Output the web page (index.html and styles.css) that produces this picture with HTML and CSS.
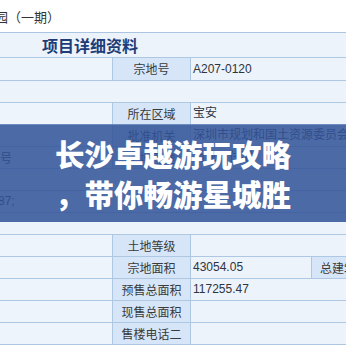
FILE: index.html
```html
<!DOCTYPE html>
<html lang="zh-CN">
<head>
<meta charset="utf-8">
<title>项目详细资料</title>
<link rel="stylesheet" href="styles.css">
</head>
<body>
<div class="top"><span class="crumb">园（一期）</span></div>
<div class="sheet">
  <div class="row head"><span class="head-title">项目详细资料</span></div>
  <div class="row first"><div class="c-left"></div><div class="c-label">宗地号</div><div class="c-val">A207-0120</div></div>
  <div class="row"></div>
  <div class="row"><div class="c-left"></div><div class="c-label">所在区域</div><div class="c-val">宝安</div></div>
  <div class="row"><div class="c-left"></div><div class="c-label">批准机关</div><div class="c-val">深圳市规划和国土资源委员会</div></div>
  <div class="row"><div class="c-left"><span class="spill">证号</span></div><div class="c-label">土地用途</div><div class="c-val">商业、住宅</div></div>
  <div class="row"></div>
  <div class="row"><div class="c-left"><span class="spill num">87;</span></div></div>
  <div class="row"></div>
  <div class="row"><div class="c-left"></div><div class="c-label">土地等级</div><div class="c-val"></div></div>
  <div class="row"><div class="c-left"></div><div class="c-label">宗地面积</div><div class="c-val narrow">43054.05</div><div class="c-label wide">总建筑面积</div></div>
  <div class="row"><div class="c-left"></div><div class="c-label">预售总面积</div><div class="c-val">117255.47</div></div>
  <div class="row"><div class="c-left"></div><div class="c-label">现售总面积</div><div class="c-val"></div></div>
  <div class="row"><div class="c-left"></div><div class="c-label">售楼电话二</div><div class="c-val"></div></div>

  <div class="banner">
    <div class="banner-line">长沙卓越游玩攻略</div>
    <div class="banner-line">，带你畅游星城胜</div>
  </div>
</div>
</body>
</html>
```

FILE: styles.css
```css
html, body {
  margin: 0;
  padding: 0;
  background: #ffffff;
  overflow: hidden;
}
body {
  width: 346px;
  height: 346px;
  font-family: "Liberation Sans", "Noto Sans CJK SC", sans-serif;
  font-size: 12px;
  color: #333333;
}
.top {
  height: 32px;
  line-height: 34px;
  font-size: 13px;
  font-family: "Noto Sans CJK SC", sans-serif;
  color: #333;
  white-space: nowrap;
  overflow: hidden;
}
.crumb {
  margin-left: -5px;
}
.sheet {
  position: relative;
  border-top: 1px solid #aac4e2;
  background: #edf3fa;
}
.row {
  display: flex;
  height: 21px;
  line-height: 21px;
  border-bottom: 1px solid #aec8e4;
  background: #edf3fa;
  white-space: nowrap;
  overflow: hidden;
}
.row.first {
  height: 22px;
  line-height: 22px;
}
.row.head {
  height: 24px;
  line-height: 24px;
  background: #ecf3fb;
}
.head-title {
  padding-left: 42px;
  font-family: "Noto Sans CJK SC", sans-serif;
  font-weight: 700;
  font-size: 16px;
  color: #1d3c78;
}
.c-left {
  width: 112px;
  flex: none;
  overflow: hidden;
  background: #eef4fb;
}
.spill {
  display: inline-block;
  margin-left: -12px;
  font-family: "Noto Sans CJK SC", sans-serif;
}
.spill.num {
  margin-left: -2px;
  font-family: "Liberation Sans", sans-serif;
}
.c-label {
  box-sizing: border-box;
  width: 79px;
  flex: none;
  text-align: center;
  background: #d6e6f8;
  border-left: 1px solid #aec8e4;
  border-right: 1px solid #aec8e4;
  font-family: "Noto Sans CJK SC", sans-serif;
  color: #3a3a3a;
}
.c-label.wide {
  width: 90px;
  border-right: none;
  text-align: left;
  padding-left: 8px;
}
.c-val {
  flex: 1;
  padding-left: 2px;
  font-family: "Liberation Sans", "Noto Sans CJK SC", sans-serif;
  color: #2e3440;
  overflow: hidden;
}
.c-val.narrow {
  flex: none;
  width: 118px;
}
.banner {
  position: absolute;
  left: 0;
  top: 91px;
  width: 346px;
  height: 98px;
  box-sizing: border-box;
  padding: 8px 0 0 55px;
  background: rgba(49, 83, 151, 0.86);
  border-top: 1px solid rgba(120, 150, 200, 0.8);
}
.banner-line {
  height: 40px;
  line-height: 40px;
  font-family: "Noto Sans CJK SC", sans-serif;
  font-weight: 900;
  font-size: 29.5px;
  color: #ffffff;
  white-space: nowrap;
}
```
